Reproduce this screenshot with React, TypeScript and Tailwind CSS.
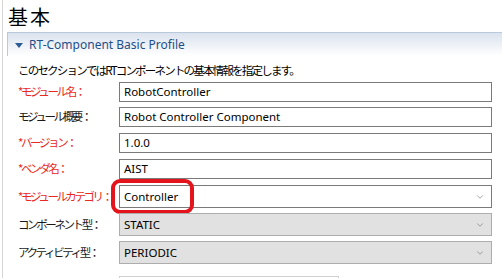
import { ChevronDown } from "lucide-react";

const jp = "font-['Meiryo_UI','Noto_Sans_CJK_JP',sans-serif] text-[11.5px]";
const latin = "font-['Segoe_UI','Noto_Sans','Noto_Sans_CJK_JP',sans-serif]";

type Row = {
  label: string;
  value: string;
  required?: boolean;
  kind: "text" | "combo" | "readonly";
  gap: string;
  highlight?: boolean;
};

const rows: Row[] = [
  { label: "*モジュール名：", value: "RobotController", required: true, kind: "text", gap: "mt-0" },
  { label: "モジュール概要：", value: "Robot Controller Component", kind: "text", gap: "mt-[5px]" },
  { label: "*バージョン：", value: "1.0.0", required: true, kind: "text", gap: "mt-[6px]" },
  { label: "*ベンダ名：", value: "AIST", required: true, kind: "text", gap: "mt-[6px]" },
  { label: "*モジュールカテゴリ：", value: "Controller", required: true, kind: "combo", gap: "mt-[6px]", highlight: true },
  { label: "コンポーネント型：", value: "STATIC", kind: "readonly", gap: "mt-[5px]" },
  { label: "アクティビティ型：", value: "PERIODIC", kind: "readonly", gap: "mt-[5px]" }
];

function Field({ row }: { row: Row }) {
  if (row.kind === "text") {
    return (
      <div className={`flex h-[20px] w-[373px] items-center border border-[#7a7a7a] bg-white pl-[4px] text-[11.5px] text-black ${latin}`}>
        {row.value}
      </div>
    );
  }
  const readonly = row.kind === "readonly";
  return (
    <div className="relative">
      <div
        className={`flex h-[23px] w-[373px] items-center justify-between border pl-[4px] pr-[6px] text-[11.5px] text-black ${latin} ${
          readonly ? "border-[#adadad] bg-[#e1e1e1]" : "border-[#7a7a7a] bg-white"
        }`}
      >
        <span>{row.value}</span>
        <ChevronDown size={10} strokeWidth={1.5} className="text-[#707070]" />
      </div>
      {row.highlight && (
        <div className="absolute left-[-8px] top-[-6px] h-[35px] w-[83px] rounded-[9px] border-[4px] border-[#e3141c]" />
      )}
    </div>
  );
}

export default function App() {
  return (
    <div className="h-[278px] w-[503px] overflow-hidden bg-white">
      <div className="ml-[2px] h-full border-l border-[#d6d6d6]">
        <h1 className="pl-[5px] pt-[4px] font-['Noto_Sans_CJK_JP',sans-serif] text-[20px] leading-[26px] tracking-[2px] text-black">基本</h1>

        <section className="ml-[4px] mt-[2px] w-[495px]">
          <div className="flex h-[24px] items-center border-l border-t border-[#b9c9dc] bg-gradient-to-b from-[#dbe3ee] to-white pl-[7px]">
            <svg width="8" height="5" viewBox="0 0 8 5" className="mt-[1px]">
              <path d="M0 0 L8 0 L4 5 Z" fill="#2d5c94" />
            </svg>
            <span className={`ml-[6px] text-[12px] text-[#1f4f8a] ${latin}`}>RT-Component Basic Profile</span>
          </div>

          <div className="pl-[11px]">
            <p className={`mt-[6px] h-[20px] leading-[16px] tracking-[-1.8px] text-black ${jp}`}>
              このセクションではRTコンポーネントの基本情報を指定します。
            </p>

            <div className="flex flex-col">
              {rows.map((row) => (
                <div key={row.label} className={`flex items-center ${row.gap}`}>
                  <span
                    className={`w-[101px] whitespace-nowrap tracking-[-2.4px] ${jp} ${
                      row.required ? "text-[#ea2a22]" : "text-[#1a1a1a]"
                    }`}
                  >
                    {row.label}
                  </span>
                  <Field row={row} />
                </div>
              ))}
              <div className="mt-[12px] flex">
                <span className="w-[101px]" />
                <div className="h-[20px] w-[220px] border border-[#d0d0d0] bg-white" />
              </div>
            </div>
          </div>
        </section>
      </div>
    </div>
  );
}
